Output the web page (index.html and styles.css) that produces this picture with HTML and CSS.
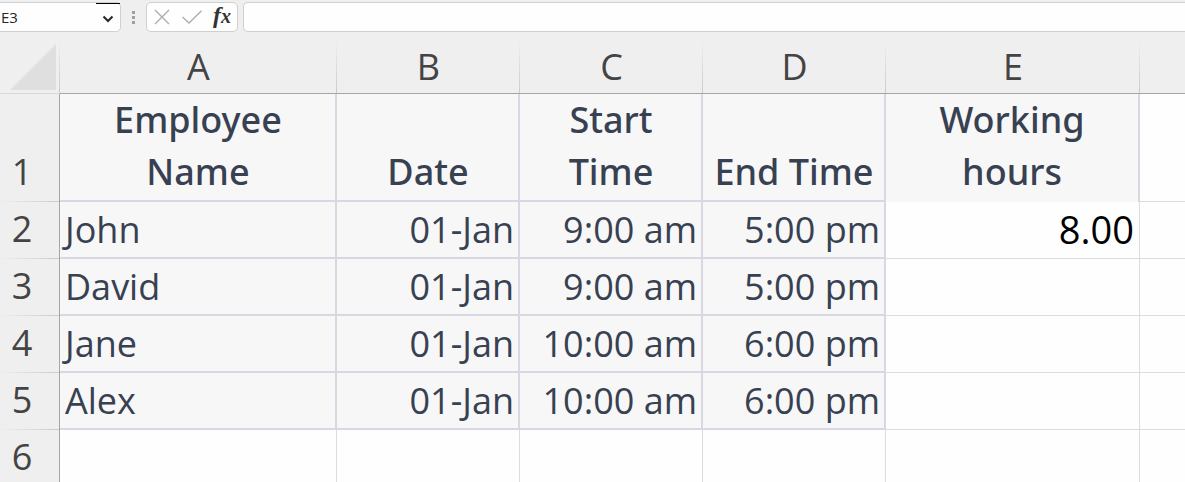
FILE: index.html
```html
<!DOCTYPE html>
<html lang="en">
<head>
    <meta charset="UTF-8">
    <meta name="viewport" content="width=device-width, initial-scale=1.0">
    <title>Working Hours</title>
    <link rel="stylesheet" href="styles.css">
</head>
<body>
    <div class="formula-bar">
        <div class="name-box">
            <input type="text" value="E3" aria-label="Name box">
            <button type="button" aria-label="Show names">
                <svg width="12" height="8" viewBox="0 0 12 8"><path d="M1.5 1.5 L6 6 L10.5 1.5" fill="none" stroke="#262626" stroke-width="2"/></svg>
            </button>
        </div>
        <div class="grip"><span></span><span></span><span></span></div>
        <div class="formula-buttons">
            <button type="button" aria-label="Cancel">
                <svg width="16" height="16" viewBox="0 0 16 16"><path d="M1 1 L15 15 M15 1 L1 15" fill="none" stroke="#a9afb3" stroke-width="1.4"/></svg>
            </button>
            <button type="button" aria-label="Enter">
                <svg width="20" height="14" viewBox="0 0 20 14"><path d="M0.5 7 L7 13 L19.5 0.7" fill="none" stroke="#a9afb3" stroke-width="1.4"/></svg>
            </button>
            <button type="button" class="fx" aria-label="Insert function"><span>f</span>x</button>
        </div>
        <input type="text" class="formula-input" aria-label="Formula">
    </div>

    <table class="sheet">
        <colgroup>
            <col class="col-num">
            <col class="col-a">
            <col class="col-b">
            <col class="col-c">
            <col class="col-d">
            <col class="col-e">
            <col>
        </colgroup>
        <thead>
            <tr>
                <th class="corner"><svg width="46" height="46" viewBox="0 0 46 46"><path d="M46 0 V46 H0 Z" fill="#dfdfdf"/></svg></th>
                <th>A</th>
                <th>B</th>
                <th>C</th>
                <th>D</th>
                <th>E</th>
                <th></th>
            </tr>
        </thead>
        <tbody>
            <tr class="titles">
                <th>1</th>
                <td class="filled">Employee Name</td>
                <td class="filled">Date</td>
                <td class="filled">Start<br>Time</td>
                <td class="filled">End Time</td>
                <td class="filled open">Working hours</td>
                <td></td>
            </tr>
            <tr>
                <th>2</th>
                <td class="filled name">John</td>
                <td class="filled">01-Jan</td>
                <td class="filled">9:00 am</td>
                <td class="filled">5:00 pm</td>
                <td class="result">8.00</td>
                <td></td>
            </tr>
            <tr>
                <th>3</th>
                <td class="filled name">David</td>
                <td class="filled">01-Jan</td>
                <td class="filled">9:00 am</td>
                <td class="filled">5:00 pm</td>
                <td></td>
                <td></td>
            </tr>
            <tr>
                <th>4</th>
                <td class="filled name">Jane</td>
                <td class="filled">01-Jan</td>
                <td class="filled">10:00 am</td>
                <td class="filled">6:00 pm</td>
                <td></td>
                <td></td>
            </tr>
            <tr>
                <th>5</th>
                <td class="filled name">Alex</td>
                <td class="filled">01-Jan</td>
                <td class="filled">10:00 am</td>
                <td class="filled">6:00 pm</td>
                <td></td>
                <td></td>
            </tr>
            <tr>
                <th>6</th>
                <td></td>
                <td></td>
                <td></td>
                <td></td>
                <td></td>
                <td></td>
            </tr>
        </tbody>
    </table>
</body>
</html>
```
FILE: styles.css
```css
* {
    box-sizing: border-box;
}

body {
    margin: 0;
    background: #fefefe;
    font-family: "Open Sans", "Noto Sans", sans-serif;
    color: #444;
    overflow: hidden;
}

button, input {
    border: none;
    background: none;
    padding: 0;
    margin: 0;
    font-family: inherit;
    outline: none;
}

/* Formula bar */
.formula-bar {
    display: flex;
    height: 38px;
    padding-top: 2px;
    background: #efefef;
}

.name-box, .formula-buttons, .formula-input {
    height: 30px;
    background: #fefefe;
    border: 1px solid #d0d0d0;
}

.name-box {
    display: flex;
    width: 121px;
    border-left: none;
    border-radius: 0 5px 5px 0;
}

.name-box input {
    flex: 1;
    min-width: 0;
    padding-left: 1px;
    font-size: 15px;
    color: #262626;
}

.name-box button {
    width: 24px;
    border-top: 1px solid #000;
}

.grip {
    display: flex;
    flex-direction: column;
    justify-content: center;
    align-items: center;
    gap: 2px;
    width: 25px;
    height: 30px;
}

.grip span {
    width: 3px;
    height: 3px;
    background: #a0a0a0;
}

.formula-buttons {
    display: flex;
    align-items: center;
    justify-content: space-between;
    width: 92px;
    margin-right: 5px;
    padding: 0 6px 0 7px;
    border-radius: 5px;
}

.formula-buttons button {
    display: flex;
}

.formula-buttons .fx {
    align-items: baseline;
    padding-bottom: 3px;
    font-family: "Liberation Serif", serif;
    font-size: 20px;
    line-height: 24px;
    font-style: italic;
    font-weight: bold;
    color: #333;
}

.fx span {
    font-size: 24px;
}

.formula-input {
    flex: 1;
    padding: 0 8px;
    border-right: none;
    border-radius: 5px 0 0 5px;
}

/* Sheet */
.sheet {
    width: 100%;
    table-layout: fixed;
    border-collapse: separate;
    border-spacing: 0;
    font-size: 36px;
    line-height: 52px;
}

.col-num { width: 60px; }
.col-a { width: 277px; }
.col-b, .col-c, .col-d { width: 183px; }
.col-e { width: 254px; }

.sheet th {
    padding: 0;
    background: #efefef;
    font-weight: normal;
}

.sheet thead th {
    height: 56px;
    padding-top: 3px;
    border-bottom: 1px solid #a6a6a6;
    background: linear-gradient(#efefef, #cacaca) right bottom / 1px 52px no-repeat #efefef;
}

.sheet thead th:last-child {
    background: #efefef;
}

.sheet thead .corner {
    padding: 0 4px 3px 0;
    text-align: right;
    vertical-align: bottom;
    border-bottom-color: #d8d8d8;
}

.corner svg {
    display: block;
    margin-left: auto;
}

.sheet tbody th {
    padding: 0 15px 4px 0;
    border-right: 1px solid #a6a6a6;
    background: linear-gradient(to right, #efefef, #cacaca) left bottom / 100% 1px no-repeat #efefef;
    vertical-align: bottom;
}

.sheet td {
    height: 57px;
    padding: 0 5px 2px;
    border-right: 1px solid #dcdcdc;
    border-bottom: 1px solid #dcdcdc;
    text-align: right;
    vertical-align: bottom;
    white-space: nowrap;
}

.sheet td:last-child {
    border-right: none;
}

.sheet .filled {
    padding: 0 4px 1px 5px;
    border-right: 2px solid #d8d7e2;
    border-bottom: 2px solid #d8d7e2;
    background: #f7f7f7;
    color: #374151;
}

.sheet .name {
    text-align: left;
}

.sheet .titles td {
    height: 108px;
    padding-bottom: 2px;
    font-family: "Noto Sans", "Open Sans", sans-serif;
    font-weight: 500;
    text-align: center;
    white-space: normal;
}

.sheet .titles .open {
    padding: 0 40px 4px;
    border-bottom: none;
}

.sheet .result {
    padding-bottom: 3px;
    font-size: 38px;
    color: #000;
}
```
